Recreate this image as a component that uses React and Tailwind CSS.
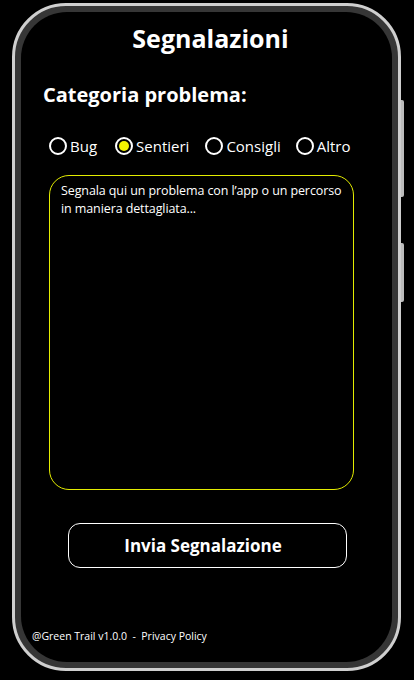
import { useState } from 'react';

const categories = [
  { label: 'Bug', gap: 'ml-0' },
  { label: 'Sentieri', gap: 'ml-[18px]' },
  { label: 'Consigli', gap: 'ml-[16px]' },
  { label: 'Altro', gap: 'ml-[15px]' },
];

function Radio({ label, checked, onClick, className }) {
  return (
    <button type="button" onClick={onClick} className={`flex items-center gap-[3px] text-white ${className}`}>
      <span className="flex h-[18px] w-[18px] items-center justify-center rounded-full border-2 border-white p-[2px]">
        {checked && <span className="h-full w-full rounded-full bg-[#f2f200]" />}
      </span>
      <span className="text-[15px] leading-[18px]">{label}</span>
    </button>
  );
}

export default function App() {
  const [category, setCategory] = useState('Sentieri');

  return (
    <div
      className="h-[680px] w-[414px] overflow-hidden bg-black pl-[12px] pt-[3px]"
      style={{ fontFamily: '"Open Sans", "Noto Sans", sans-serif' }}
    >
      {/* Phone */}
      <div className="relative h-[668px] w-[389px] rounded-[54px] border-[3px] border-[#cfcfcf] bg-[#363636] p-[6px]">
        {/* side buttons */}
        <div className="absolute right-[-6px] top-[94px] h-[97px] w-[3px] rounded-r-[2px] bg-[#bdbdbd]" />
        <div className="absolute right-[-6px] top-[237px] h-[59px] w-[3px] rounded-r-[2px] bg-[#bdbdbd]" />

        {/* Screen */}
        <div className="flex h-full w-full flex-col rounded-[46px] bg-black text-white">
          <h1 className="mt-[10px] h-8 pl-[8px] text-center text-[25px] font-bold leading-8">
            Segnalazioni
          </h1>

          <h2 className="mt-[27px] h-7 pl-[22px] text-[20px] font-bold leading-7">
            Categoria problema:
          </h2>

          <div className="mt-[28px] flex h-[18px] items-center pl-[28px]">
            {categories.map((c) => (
              <Radio
                key={c.label}
                label={c.label}
                className={c.gap}
                checked={category === c.label}
                onClick={() => setCategory(c.label)}
              />
            ))}
          </div>

          <div className="ml-[28px] mt-[20px] h-[315px] w-[305px] rounded-[20px] border border-[#e3ec00] py-[6px] pl-[11px] pr-[6px]">
            <p className="text-[12.5px] font-medium leading-[18px] tracking-[-0.1px] text-white">
              Segnala qui un problema con l’app o un percorso in maniera dettagliata...
            </p>
          </div>

          <button
            type="button"
            className="ml-[47px] mt-[33px] flex h-[45px] w-[279px] items-center justify-center rounded-[12px] border border-white pr-[9px] text-[17px] font-bold"
          >
            Invia Segnalazione
          </button>

          <p className="mt-[61px] pl-[11px] text-[10.5px] font-medium leading-[14px] text-white">
            @Green Trail v1.0.0 &nbsp;-&nbsp; Privacy Policy
          </p>
        </div>
      </div>
    </div>
  );
}
